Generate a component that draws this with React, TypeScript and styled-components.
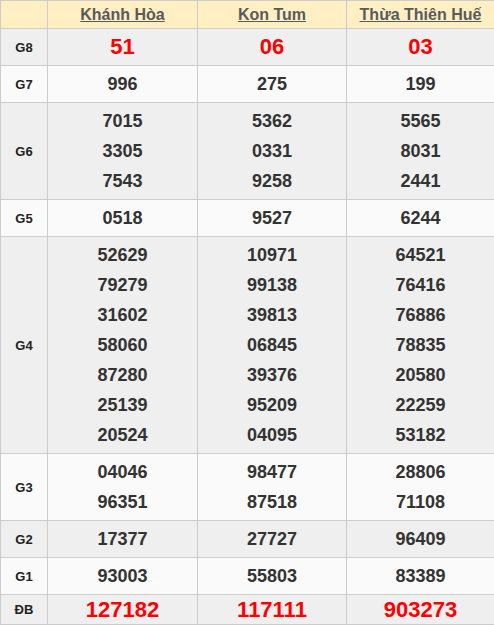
import React from "react";
import styled, { createGlobalStyle } from "styled-components";

const GlobalStyle = createGlobalStyle`
  body {
    margin: 0;
    background: #fff;
    font-family: "Liberation Sans", Arial, sans-serif;
  }
`;

const Table = styled.table`
  width: 494px;
  border-collapse: collapse;
  table-layout: fixed;
  border: 1px solid #cccccc;
`;

const Col = styled.col<{ $w: number }>`
  width: ${(props) => props.$w}px;
`;

const HeadCell = styled.th`
  background: #ffefc2;
  border: 1px solid #cccccc;
  padding: 0;
  height: 27px;
  line-height: 27px;
  text-align: center;
  a {
    font-size: 16px;
    font-weight: bold;
    color: #585a5e;
    text-decoration: underline;
  }
`;

const Row = styled.tr<{ $alt: boolean }>`
  background: ${(props) => (props.$alt ? "#fafafa" : "#efefef")};
`;

const LabelCell = styled.td`
  border: 1px solid #cccccc;
  padding: 0;
  text-align: center;
  font-size: 13px;
  font-weight: bold;
  color: #222;
`;

const NumCell = styled.td`
  border: 1px solid #cccccc;
  padding: 3px 0;
  text-align: center;
  vertical-align: middle;
`;

const NumLine = styled.div<{ $red?: boolean; $lh: number }>`
  line-height: ${(props) => props.$lh}px;
  font-size: ${(props) => (props.$red ? "22px" : "18px")};
  font-weight: bold;
  color: ${(props) => (props.$red ? "#ff0000" : "#333333")};
`;

const provinces = ["Khánh Hòa", "Kon Tum", "Thừa Thiên Huế"];
const widths = [47, 150, 149, 148];

// [label, [col1 numbers], [col2 numbers], [col3 numbers]]
const results: [string, string[][]][] = [
  ["G8", [["51"], ["06"], ["03"]]],
  ["G7", [["996"], ["275"], ["199"]]],
  [
    "G6",
    [
      ["7015", "3305", "7543"],
      ["5362", "0331", "9258"],
      ["5565", "8031", "2441"],
    ],
  ],
  ["G5", [["0518"], ["9527"], ["6244"]]],
  [
    "G4",
    [
      ["52629", "79279", "31602", "58060", "87280", "25139", "20524"],
      ["10971", "99138", "39813", "06845", "39376", "95209", "04095"],
      ["64521", "76416", "76886", "78835", "20580", "22259", "53182"],
    ],
  ],
  [
    "G3",
    [
      ["04046", "96351"],
      ["98477", "87518"],
      ["28806", "71108"],
    ],
  ],
  ["G2", [["17377"], ["27727"], ["96409"]]],
  ["G1", [["93003"], ["55803"], ["83389"]]],
  ["ĐB", [["127182"], ["117111"], ["903273"]]],
];

export default function App() {
  return (
    <>
      <GlobalStyle />
      <Table>
        <colgroup>
          {widths.map((w, i) => (
            <Col key={i} $w={w} />
          ))}
        </colgroup>
        <thead>
          <tr>
            <HeadCell />
            {provinces.map((p) => (
              <HeadCell key={p}>
                <a>{p}</a>
              </HeadCell>
            ))}
          </tr>
        </thead>
        <tbody>
          {results.map(([label, cols], i) => {
            const red = label === "G8" || label === "ĐB";
            const lh = label === "ĐB" ? 23 : 30;
            return (
              <Row key={label} $alt={i % 2 === 1}>
                <LabelCell>{label}</LabelCell>
                {cols.map((nums, j) => (
                  <NumCell key={j}>
                    {nums.map((n) => (
                      <NumLine key={n} $red={red} $lh={lh}>
                        {n}
                      </NumLine>
                    ))}
                  </NumCell>
                ))}
              </Row>
            );
          })}
        </tbody>
      </Table>
    </>
  );
}
